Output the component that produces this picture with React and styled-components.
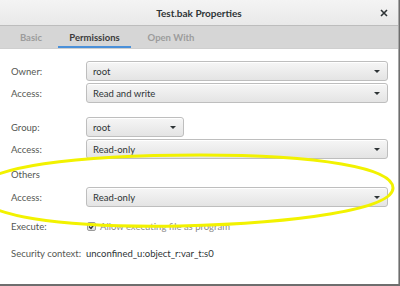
import React from "react";
import styled, { createGlobalStyle } from "styled-components";

const Global = createGlobalStyle`
    html, body {
        margin: 0;
        padding: 0;
        background: #6e6e6e;
    }
    body {
        width: 400px;
        height: 286px;
        overflow: hidden;
        font-family: Lato, "Liberation Sans", sans-serif;
    }
`

const Window = styled.div`
    position: relative;
    width: 398px;
    height: 284px;
    background: #ffffff;
    border-right: 1px solid #a8a8a8;
    display: flex;
    flex-direction: column;
    overflow: hidden;
`

const TitleBar = styled.div`
    height: 26px;
    flex: none;
    display: flex;
    align-items: center;
    justify-content: center;
    position: relative;
    background: linear-gradient(#f4f4f4, #e9e9e9);
    border-bottom: 1px solid #bdbdbd;
    box-sizing: border-box;
    font-size: 10px;
    font-weight: 700;
    color: #2e3436;
`

const CloseButton = styled.div`
    position: absolute;
    right: 10px;
    top: 9px;
    width: 8px;
    height: 8px;
    display: flex;
`

const TabBar = styled.div`
    height: 22px;
    flex: none;
    background: #d6d6d6;
    display: flex;
    align-items: stretch;
    padding-left: 4px;
    border-bottom: 1px solid #cfcfcf;
`

const Tab = styled.div`
    display: flex;
    align-items: center;
    justify-content: center;
    width: ${(p) => p.$width}px;
    font-size: 9.5px;
    font-weight: 700;
    color: ${(p) => (p.$active ? "#3b3b3b" : "#9c9c9c")};
    box-shadow: ${(p) => (p.$active ? "inset 0 -2px 0 #4a90d9" : "none")};
`

const Content = styled.div`
    padding: 12px 10px 0 11px;
    display: flex;
    flex-direction: column;
`

const Row = styled.div`
    display: flex;
    align-items: center;
    min-height: ${(p) => p.$h || 20}px;
    margin-top: ${(p) => p.$mt || 0}px;
`

const Label = styled.div`
    width: 75px;
    flex: none;
    font-size: 9.5px;
    color: #555753;
`

const Heading = styled.div`
    font-size: 9.5px;
    color: #555753;
    line-height: 12px;
    margin-top: ${(p) => p.$mt || 0}px;
`

const Combo = styled.div`
    box-sizing: border-box;
    height: 20px;
    width: ${(p) => (p.$width ? `${p.$width}px` : "auto")};
    flex: ${(p) => (p.$width ? "none" : "1")};
    display: flex;
    align-items: center;
    justify-content: space-between;
    padding: 0 7px 0 6px;
    border: 1px solid #bebebe;
    border-radius: 3px;
    background: linear-gradient(#f6f6f6, #e4e4e4);
    box-shadow: inset 0 1px 0 #ffffff;
    font-size: 9.5px;
    color: #2e3436;
`

const Arrow = styled.span`
    width: 0;
    height: 0;
    border-left: 3px solid transparent;
    border-right: 3px solid transparent;
    border-top: 3px solid #2e3436;
`

const Check = styled.div`
    width: 9px;
    height: 9px;
    box-sizing: border-box;
    margin-left: 1px;
    margin-right: 4px;
    border: 1px solid #9a9a9a;
    border-radius: 2px;
    background: linear-gradient(#f4f4f4, #dedede);
    display: flex;
    align-items: center;
    justify-content: center;
`

const Muted = styled.span`
    font-size: 9.5px;
    color: #8a8a8a;
`

const Value = styled.span`
    font-size: 9.5px;
    color: #2e3436;
`

const Annotation = styled.svg`
    position: absolute;
    left: 0;
    top: 0;
    pointer-events: none;
`

function Select({ value, width }) {
    return (
        <Combo $width={width}>
            <span>{value}</span>
            <Arrow />
        </Combo>
    )
}

export default function App() {
    return (
        <>
            <Global />
            <Window>
                <TitleBar>
                    Test.bak Properties
                    <CloseButton>
                        <svg width="8" height="8" viewBox="0 0 8 8">
                            <path d="M1 1L7 7M7 1L1 7" stroke="#2e3436" strokeWidth="1.6" />
                        </svg>
                    </CloseButton>
                </TitleBar>
                <TabBar>
                    <Tab $width={54}>Basic</Tab>
                    <Tab $width={73} $active>Permissions</Tab>
                    <Tab $width={80}>Open With</Tab>
                </TabBar>
                <Content>
                    <Row>
                        <Label>Owner:</Label>
                        <Select value="root" />
                    </Row>
                    <Row $mt={2}>
                        <Label>Access:</Label>
                        <Select value="Read and write" />
                    </Row>
                    <Row $mt={14}>
                        <Label>Group:</Label>
                        <Select value="root" width={98} />
                    </Row>
                    <Row $mt={2}>
                        <Label>Access:</Label>
                        <Select value="Read-only" />
                    </Row>
                    <Heading $mt={10}>Others</Heading>
                    <Row $mt={6}>
                        <Label>Access:</Label>
                        <Select value="Read-only" />
                    </Row>
                    <Row $mt={9}>
                        <Label>Execute:</Label>
                        <Check>
                            <svg width="7" height="7" viewBox="0 0 7 7">
                                <path d="M1 3.5L3 5.5L6 1.5" stroke="#2e3436" strokeWidth="1.4" fill="none" />
                            </svg>
                        </Check>
                        <Muted>Allow executing file as program</Muted>
                    </Row>
                    <Row $mt={7}>
                        <Label>Security context:</Label>
                        <Value>unconfined_u:object_r:var_t:s0</Value>
                    </Row>
                </Content>
                <Annotation width="398" height="284" viewBox="0 0 398 284">
                    <path
                        d="M-22 192 C-22 166 80 155 200 155 C320 155 393 168 393 188 C393 209 300 223 180 226 C60 228 -22 216 -22 192 Z"
                        fill="none"
                        stroke="#f2f200"
                        strokeWidth="3"
                    />
                </Annotation>
            </Window>
        </>
    )
}
